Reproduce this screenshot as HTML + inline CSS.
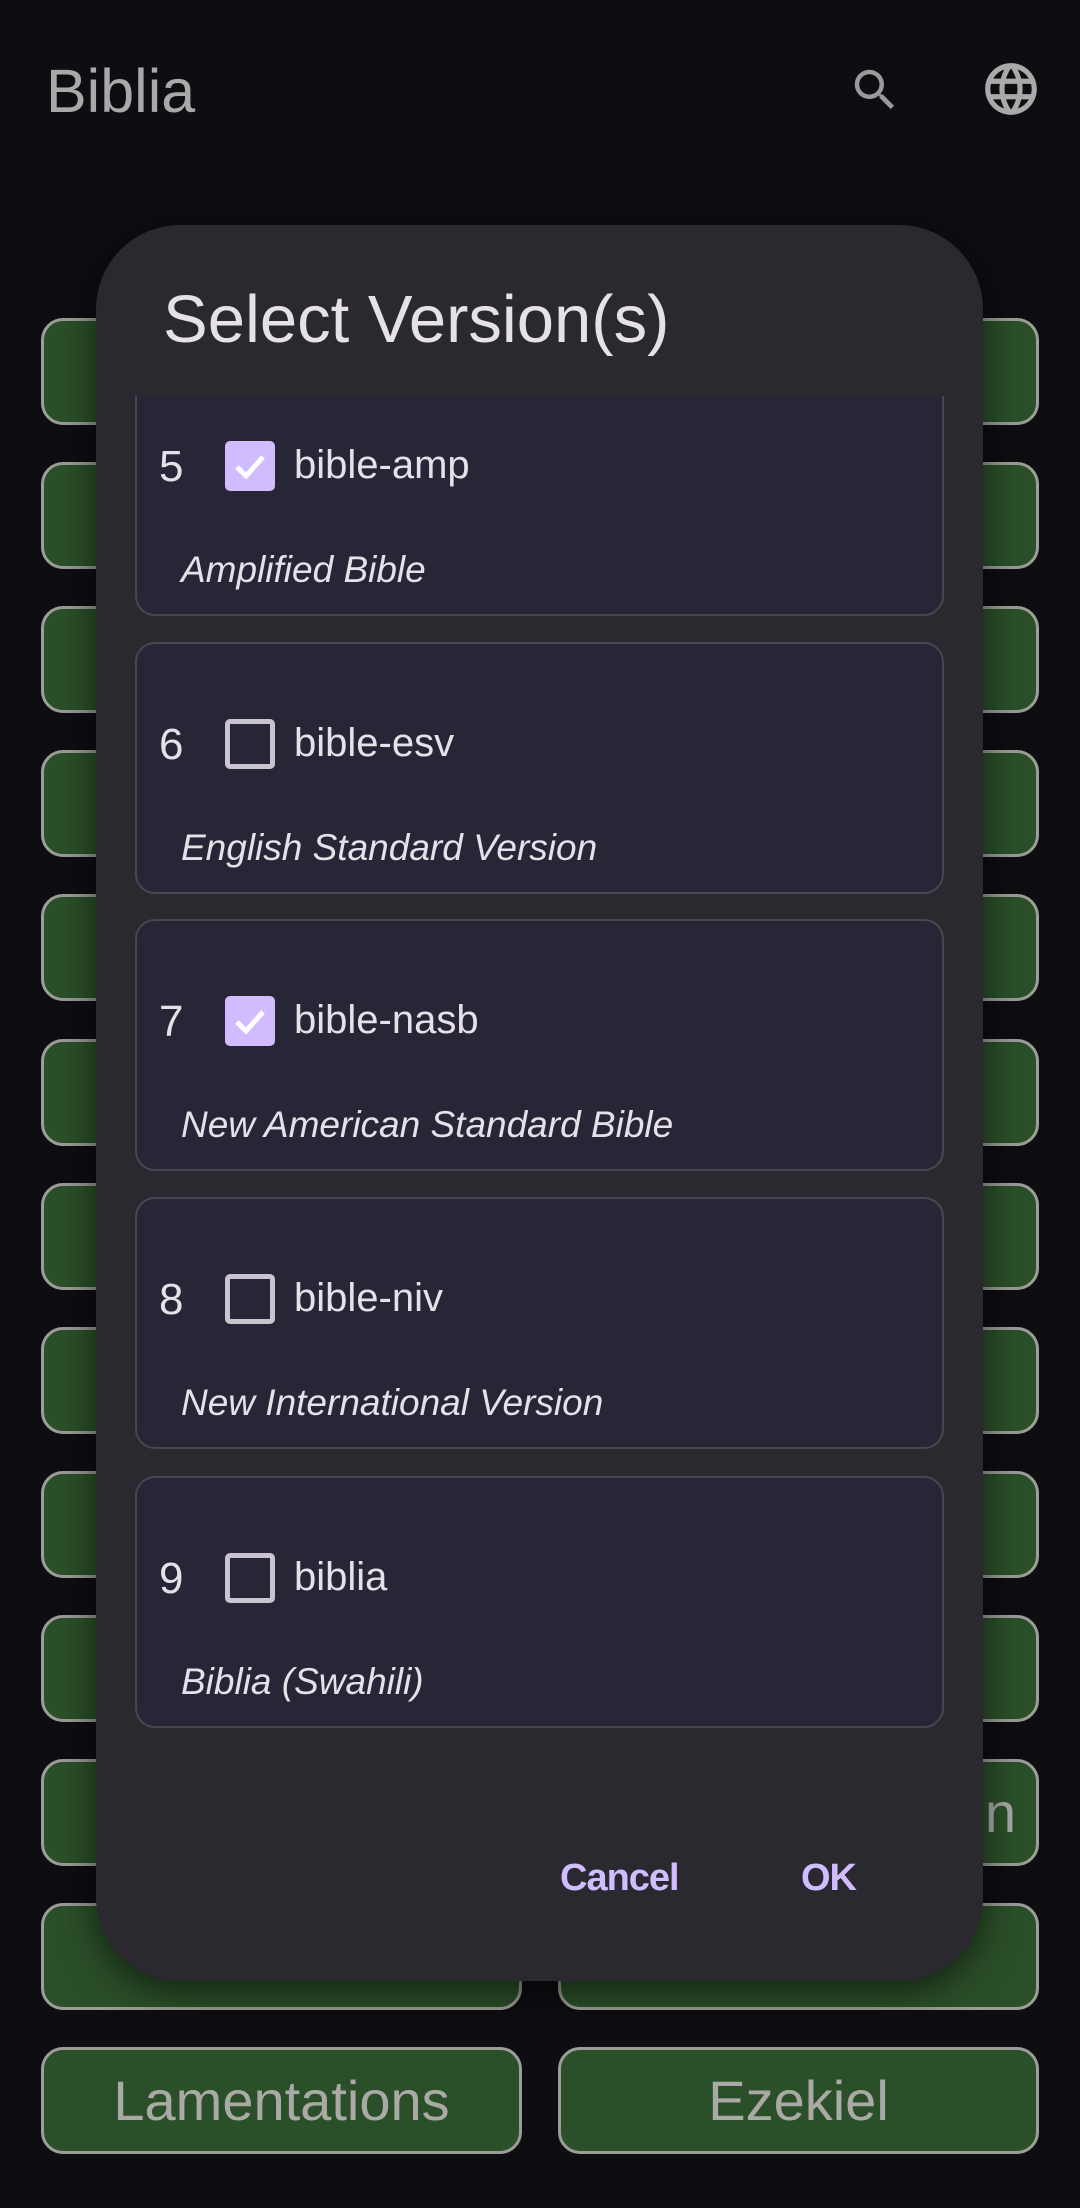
<!DOCTYPE html>
<html><head><meta charset="utf-8"><style>
*{margin:0;padding:0;box-sizing:border-box}
body{width:1080px;height:2208px;background:#0e0d12;position:relative;overflow:hidden;font-family:"Liberation Sans",sans-serif}
.title{position:absolute;left:46px;top:56px;font-size:61px;color:#a9a9a9}
.btn{position:absolute;width:481px;height:107px;background:#2b5029;border:3px solid #9b9d98;border-radius:22px;color:#a9aaa5;font-size:56px;display:flex;align-items:center;justify-content:center}
.dlg{position:absolute;left:96px;top:225px;width:887px;height:1756px;background:#2a292f;border-radius:84px;box-shadow:0 10px 40px rgba(0,0,0,.6)}
.dt{position:absolute;left:67px;top:56px;font-size:67px;color:#e6e1e8}
.list{position:absolute;left:0;top:171px;width:887px;height:1400px;overflow:hidden}
.card{position:absolute;left:39px;width:809px;height:252px;background:#282536;border:2.5px solid #48464e;border-radius:20px}
.num{position:absolute;left:22px;top:76px;font-size:44px;color:#e6e1e8}
.cb{position:absolute;left:88px;top:75px;width:50px;height:50px;border:5px solid #cac4d0;border-radius:5px}
.cb.on{background:#d0bcff;border:none}
.nm{position:absolute;left:157px;top:77px;font-size:40px;color:#e6e1e8}
.ds{position:absolute;left:44px;top:183px;font-size:37px;font-style:italic;color:#e6e1e8}
.act{position:absolute;top:1632px;font-size:38px;color:#d0bcff;font-weight:bold;letter-spacing:-1px}
</style></head><body>
<div class="title">Biblia</div>
<svg style="position:absolute;left:848px;top:63px" width="54" height="54" viewBox="0 0 24 24"><path fill="#9a9a9a" d="M15.5 14h-.79l-.28-.27A6.47 6.47 0 0 0 16 9.5 6.5 6.5 0 1 0 9.5 16c1.610 0 3.090-.59 4.230-1.57l.27.28v.79l5 4.99L20.49 19l-4.99-5zm-6 0C7.01 14 5 11.99 5 9.5S7.01 5 9.5 5 14 7.01 14 9.5 11.99 14 9.5 14z"/></svg>
<svg style="position:absolute;left:980px;top:58px" width="62" height="62" viewBox="0 0 24 24"><path fill="#a9a9a9" d="M11.99 2C6.47 2 2 6.48 2 12s4.47 10 9.99 10C17.52 22 22 17.52 22 12S17.52 2 11.99 2zm6.93 6h-2.95a15.65 15.65 0 0 0-1.38-3.56A8.03 8.03 0 0 1 18.92 8zM12 4.04c.83 1.2 1.48 2.53 1.91 3.96h-3.82c.43-1.43 1.08-2.76 1.91-3.960zM4.26 14C4.1 13.36 4 12.69 4 12s.1-1.36.26-2h3.38c-.08.66-.14 1.32-.14 2s.06 1.34.14 2H4.26zm.82 2h2.95c.32 1.25.78 2.45 1.38 3.56A7.99 7.99 0 0 1 5.08 16zm2.95-8H5.08a7.99 7.99 0 0 1 4.33-3.56A15.65 15.65 0 0 0 8.03 8zM12 19.96c-.83-1.2-1.48-2.53-1.91-3.96h3.82c-.43 1.43-1.08 2.76-1.91 3.96zM14.34 14H9.66c-.09-.66-.16-1.32-.16-2s.07-1.35.16-2h4.68c.09.65.16 1.32.16 2s-.07 1.34-.16 2zm.25 5.56c.6-1.11 1.06-2.31 1.38-3.56h2.95a8.03 8.03 0 0 1-4.33 3.56zM16.36 14c.08-.66.14-1.32.14-2s-.06-1.34-.14-2h3.380c.16.64.26 1.31.26 2s-.1 1.36-.26 2h-3.38z"/></svg>

<div class="btn" style="left:41px;top:318px"></div><div class="btn" style="left:558px;top:318px"></div>
<div class="btn" style="left:41px;top:462px"></div><div class="btn" style="left:558px;top:462px"></div>
<div class="btn" style="left:41px;top:606px"></div><div class="btn" style="left:558px;top:606px"></div>
<div class="btn" style="left:41px;top:750px"></div><div class="btn" style="left:558px;top:750px"></div>
<div class="btn" style="left:41px;top:894px"></div><div class="btn" style="left:558px;top:894px"></div>
<div class="btn" style="left:41px;top:1039px"></div><div class="btn" style="left:558px;top:1039px"></div>
<div class="btn" style="left:41px;top:1183px"></div><div class="btn" style="left:558px;top:1183px"></div>
<div class="btn" style="left:41px;top:1327px"></div><div class="btn" style="left:558px;top:1327px"></div>
<div class="btn" style="left:41px;top:1471px"></div><div class="btn" style="left:558px;top:1471px"></div>
<div class="btn" style="left:41px;top:1615px"></div><div class="btn" style="left:558px;top:1615px"></div>
<div class="btn" style="left:41px;top:1759px"></div><div class="btn" style="left:558px;top:1759px;justify-content:flex-end;padding-right:20px">n</div>
<div class="btn" style="left:41px;top:1903px"></div><div class="btn" style="left:558px;top:1903px"></div>
<div class="btn" style="left:41px;top:2047px">Lamentations</div><div class="btn" style="left:558px;top:2047px">Ezekiel</div>

<div class="dlg">
<div class="dt">Select Version(s)</div>
<div class="list">
<div class="card" style="top:-32px"><div class="num">5</div><div class="cb on"><svg width="50" height="50" viewBox="0 0 50 50"><path d="M12 26l9 9 17-19" stroke="#fff" stroke-width="5" fill="none"/></svg></div><div class="nm">bible-amp</div><div class="ds">Amplified Bible</div></div>
<div class="card" style="top:246px"><div class="num">6</div><div class="cb"></div><div class="nm">bible-esv</div><div class="ds">English Standard Version</div></div>
<div class="card" style="top:523px"><div class="num">7</div><div class="cb on"><svg width="50" height="50" viewBox="0 0 50 50"><path d="M12 26l9 9 17-19" stroke="#fff" stroke-width="5" fill="none"/></svg></div><div class="nm">bible-nasb</div><div class="ds">New American Standard Bible</div></div>
<div class="card" style="top:801px"><div class="num">8</div><div class="cb"></div><div class="nm">bible-niv</div><div class="ds">New International Version</div></div>
<div class="card" style="top:1080px"><div class="num">9</div><div class="cb"></div><div class="nm">biblia</div><div class="ds">Biblia (Swahili)</div></div>
</div>
<div class="act" style="left:464px">Cancel</div>
<div class="act" style="left:705px">OK</div>
</div>
</body></html>
